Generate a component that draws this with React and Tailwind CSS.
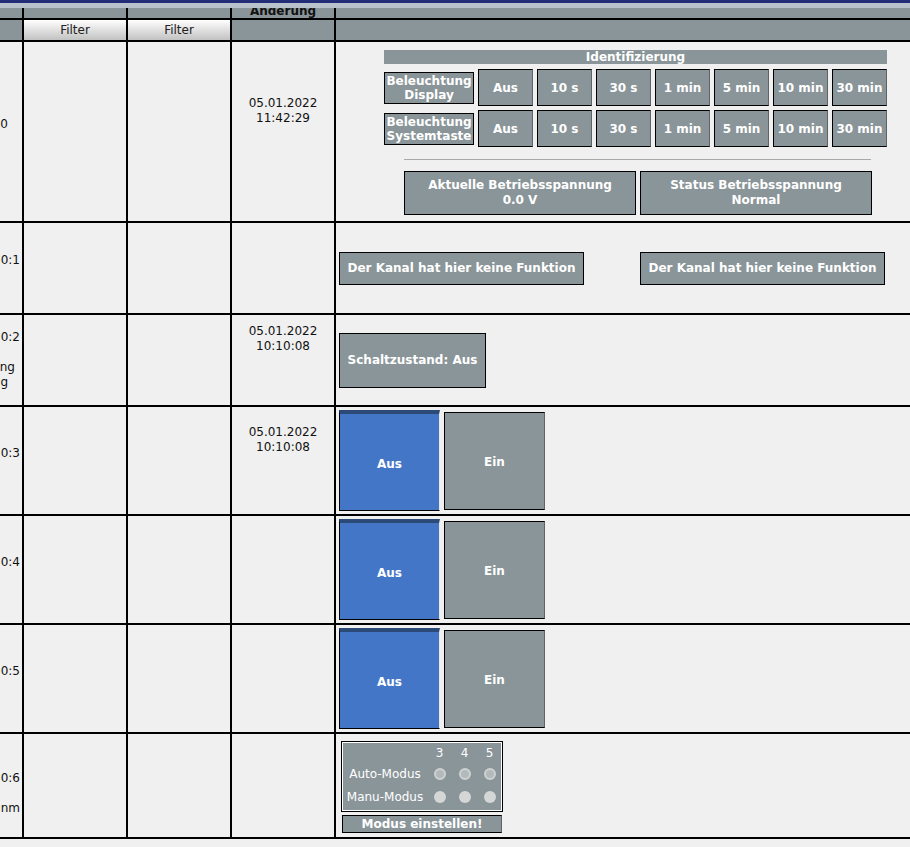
import React from 'react';

const GrayBtn = ({ className = '', children }) => (
  <div
    className={`flex items-center justify-center text-center bg-[#8a9599] border-l border-t border-b border-r border-l-black border-t-black border-b-black border-r-[#5d6466] text-white font-bold ${className}`}
  >
    {children}
  </div>
);

const times = ['Aus', '10 s', '30 s', '1 min', '5 min', '10 min', '30 min'];

// col 0 is scrolled away; only the ends of its lines peek out
const AddrCell = ({ lines }) => (
  <div className="w-[24px] shrink-0 border-r-2 border-black overflow-hidden flex flex-col justify-center">
    {lines.map((l, i) => (
      <div key={i} className={`flex justify-end h-[15px] leading-[15px] ${l.pr}`}>
        <span className="whitespace-nowrap">{l.t}</span>
      </div>
    ))}
  </div>
);

const DateCell = ({ date, time }) => (
  <div className="w-[104px] shrink-0 border-r-2 border-black flex flex-col justify-center items-center pb-[42px] leading-[15px]">
    {date && <div>{date}</div>}
    {time && <div>{time}</div>}
  </div>
);

const EmptyCell = () => <div className="w-[104px] shrink-0 border-r-2 border-black" />;

const Row = ({ h, lines, date, time, children }) => (
  <div className={`flex border-b-2 border-black ${h}`}>
    <AddrCell lines={lines} />
    <EmptyCell />
    <EmptyCell />
    <DateCell date={date} time={time} />
    <div className="flex-1 min-w-0">{children}</div>
  </div>
);

const SwitchPair = () => (
  <div className="flex gap-[4px] pl-[3px] pt-[3px]">
    <div className="w-[101px] h-[101px] pt-[3px] bg-[#4476c8] border-t-4 border-t-[#2b4a78] border-l border-l-black border-b border-b-black border-r border-r-[#e8e8e8] flex items-center justify-center text-white font-bold">
      Aus
    </div>
    <GrayBtn className="w-[101px] h-[98px] mt-[2px] pt-[2px]">Ein</GrayBtn>
  </div>
);

export default function App() {
  return (
    <div className="relative w-[910px] h-[847px] overflow-hidden bg-[#f0f0f0] text-[12px] text-[#111] font-['DejaVu_Sans',sans-serif]">
      <div className="h-[3px] bg-[#232d78]" />
      {/* light strip lying over the scrolled header */}
      <div className="absolute left-0 right-0 top-[3px] h-[5px] bg-[#b9c1cb] z-10" />

      {/* header row 1 */}
      <div className="flex h-[17px] border-b-2 border-black bg-[#8a9599]">
        <div className="w-[24px] shrink-0 border-r-2 border-black" />
        <div className="w-[104px] shrink-0 border-r-2 border-black" />
        <div className="w-[104px] shrink-0 border-r-2 border-black" />
        <div className="w-[104px] shrink-0 border-r-2 border-black overflow-hidden pt-[1px] text-center font-bold leading-[14px] text-[#111]">
          Änderung
        </div>
        <div className="flex-1" />
      </div>

      {/* header row 2 */}
      <div className="flex h-[22px] border-b-2 border-black bg-[#8a9599]">
        <div className="w-[24px] shrink-0 border-r-2 border-black" />
        <div className="w-[104px] shrink-0 border-r-2 border-black bg-gradient-to-b from-[#ffffff] to-[#c2c2c2] flex items-center justify-center text-[#222]">
          Filter
        </div>
        <div className="w-[104px] shrink-0 border-r-2 border-black bg-gradient-to-b from-[#ffffff] to-[#c2c2c2] flex items-center justify-center text-[#222]">
          Filter
        </div>
        <div className="w-[104px] shrink-0 border-r-2 border-black" />
        <div className="flex-1" />
      </div>

      {/* row 1 */}
      <Row
        h="h-[181px]"
        lines={[{ t: '0', pr: 'pr-[14px]' }, { t: '', pr: '' }]}
        date="05.01.2022"
        time="11:42:29"
      >
        <div className="pl-[48px] pt-[8px]">
          <div className="w-[503px] h-[14px] bg-[#8a9599] text-white font-bold text-center leading-[14px]">
            Identifizierung
          </div>
          {['Display', 'Systemtaste'].map((n, r) => (
            <div key={n} className={`flex gap-[4px] h-[37px] ${r === 0 ? 'mt-[5px]' : 'mt-[4px]'}`}>
              <GrayBtn className="w-[90px] h-[32px] mt-[3px] flex-col leading-[14px] border-r-black">
                <div>Beleuchtung</div>
                <div>{n}</div>
              </GrayBtn>
              {times.map((t) => (
                <GrayBtn key={t} className="w-[55px] h-[37px]">
                  {t}
                </GrayBtn>
              ))}
            </div>
          ))}
          <div className="ml-[20px] mt-[12px] w-[467px] h-px bg-[#a8a8a8]" />
          <div className="ml-[20px] mt-[11px] flex gap-[4px]">
            <GrayBtn className="w-[232px] h-[44px] flex-col leading-[15px] border-r-black">
              <div>Aktuelle Betriebsspannung</div>
              <div>0.0 V</div>
            </GrayBtn>
            <GrayBtn className="w-[232px] h-[44px] flex-col leading-[15px] border-r-black">
              <div>Status Betriebsspannung</div>
              <div>Normal</div>
            </GrayBtn>
          </div>
        </div>
      </Row>

      {/* row 2 */}
      <Row h="h-[92px]" lines={[{ t: '0:1', pr: 'pr-[2px]' }, { t: '', pr: '' }]}>
        <div className="h-full flex items-center gap-[56px] pl-[3px]">
          <GrayBtn className="w-[245px] h-[33px] border-r-black">Der Kanal hat hier keine Funktion</GrayBtn>
          <GrayBtn className="w-[245px] h-[33px] border-r-black">Der Kanal hat hier keine Funktion</GrayBtn>
        </div>
      </Row>

      {/* row 3 */}
      <Row
        h="h-[92px]"
        lines={[
          { t: '0:2', pr: 'pr-[2px]' },
          { t: '', pr: '' },
          { t: 'ng', pr: 'pr-[7px]' },
          { t: 'g', pr: 'pr-[14px]' },
        ]}
        date="05.01.2022"
        time="10:10:08"
      >
        <div className="h-full flex items-center pl-[3px]">
          <GrayBtn className="w-[147px] h-[55px] border-r-black">Schaltzustand: Aus</GrayBtn>
        </div>
      </Row>

      {/* rows 4-6 */}
      <Row h="h-[109px]" lines={[{ t: '0:3', pr: 'pr-[2px]' }, { t: '', pr: '' }]} date="05.01.2022" time="10:10:08">
        <SwitchPair />
      </Row>
      <Row h="h-[109px]" lines={[{ t: '0:4', pr: 'pr-[2px]' }, { t: '', pr: '' }]}>
        <SwitchPair />
      </Row>
      <Row h="h-[109px]" lines={[{ t: '0:5', pr: 'pr-[2px]' }, { t: '', pr: '' }]}>
        <SwitchPair />
      </Row>

      {/* row 7 */}
      <Row
        h="h-[105px]"
        lines={[
          { t: '', pr: '' },
          { t: '0:6', pr: 'pr-[2px]' },
          { t: '', pr: '' },
          { t: 'nm', pr: 'pr-[2px]' },
        ]}
      >
        <div className="pl-[5px] pt-[7px]">
          <div className="w-[162px] h-[71px] bg-[#8a9599] border border-black shadow-[inset_0_0_0_1px_#ffffff] pt-[1px] pl-[1px] text-white">
            <div className="flex h-[20px] items-center">
              <div className="w-[84px]" />
              {['3', '4', '5'].map((n) => (
                <div key={n} className="w-[25px] text-center">{n}</div>
              ))}
            </div>
            <div className="flex h-[22px] items-center">
              <div className="w-[84px] text-center">Auto-Modus</div>
              {[0, 1, 2].map((i) => (
                <div key={i} className="w-[25px] flex justify-center">
                  <div className="w-[12px] h-[12px] rounded-full bg-[#b3babb] border-2 border-[#cfd2d2]" />
                </div>
              ))}
            </div>
            <div className="flex h-[23px] items-center">
              <div className="w-[84px] text-center">Manu-Modus</div>
              {[0, 1, 2].map((i) => (
                <div key={i} className="w-[25px] flex justify-center">
                  <div className="w-[12px] h-[12px] rounded-full bg-[#d5d6d6]" />
                </div>
              ))}
            </div>
          </div>
          <GrayBtn className="ml-[1px] mt-[3px] w-[160px] h-[18px]">Modus einstellen!</GrayBtn>
        </div>
      </Row>
    </div>
  );
}
